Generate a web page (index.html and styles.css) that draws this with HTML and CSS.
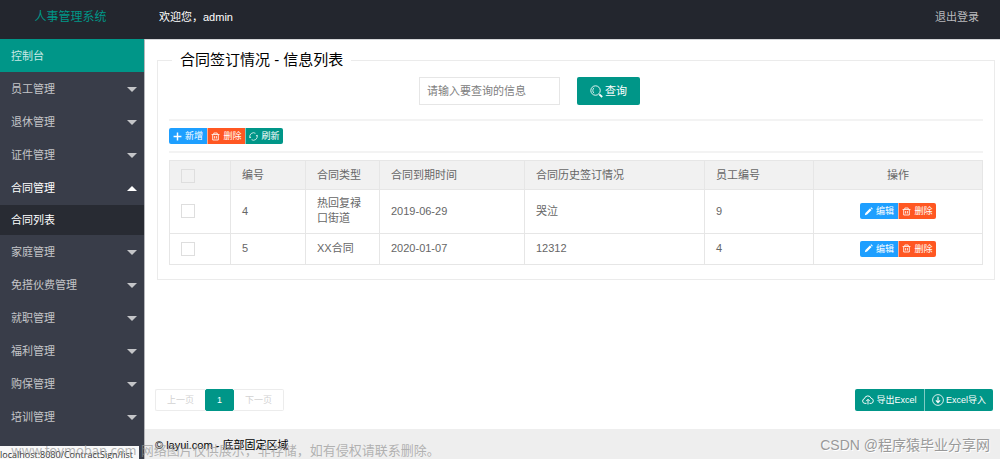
FILE: index.html
```html
<!DOCTYPE html>
<html lang="zh-CN">
<head>
<meta charset="utf-8">
<meta name="viewport" content="width=device-width, initial-scale=1">
<title>人事管理系统</title>
<link rel="stylesheet" href="styles.css">
</head>
<body>
<svg class="sprite" aria-hidden="true">
  <symbol id="i-plus" viewBox="0 0 16 16"><path d="M8 1v14M1 8h14" fill="none" stroke="currentColor" stroke-width="2.6"/></symbol>
  <symbol id="i-trash" viewBox="0 0 16 16"><path d="M1 4.5h14M5 4V1.800h6V4M3 5v9.200h10V5M6.400 7.200v4.400M9.600 7.200v4.400" fill="none" stroke="currentColor" stroke-width="1.5"/></symbol>
  <symbol id="i-refresh" viewBox="0 0 16 16"><path d="M1.500 9.500A6.700 6.700 0 0 1 11.500 2.300M14.500 6.500A6.700 6.700 0 0 1 4.500 13.700" fill="none" stroke="currentColor" stroke-width="1.3"/><path d="M0 8.500l1.700 2.700 2.300-2.200zM16 7.500l-1.700-2.700L12 7z" fill="currentColor"/></symbol>
  <symbol id="i-edit" viewBox="0 0 16 16"><path d="M1.500 14.500l1-4L10.500 2.500l3 3-8 8zM11.500 1.600l1.300-1.200 2.900 2.900-1.200 1.300z" fill="currentColor"/></symbol>
  <symbol id="i-search" viewBox="0 0 16 16"><circle cx="6.800" cy="6.800" r="5.800" fill="none" stroke="currentColor" stroke-width="1.100"/><path d="M4.800 3.500C3 5 3 8.500 4.800 10" fill="none" stroke="currentColor"/><path d="M11.500 11.500l3.500 3.300" stroke="currentColor" stroke-width="2.200"/></symbol>
  <symbol id="i-cloud" viewBox="0 0 16 16"><path d="M6 12.500H3.800a3.200 3.200 0 0 1-.5-6.300A4.600 4.600 0 0 1 12.200 5.800a3.400 3.400 0 0 1 .1 6.700H10M8 14V7.500M5.600 9.500L8 7l2.400 2.500" fill="none" stroke="currentColor" stroke-width="1.300"/></symbol>
  <symbol id="i-down" viewBox="0 0 16 16"><circle cx="8" cy="8" r="7.200" fill="none" stroke="currentColor" stroke-width="1.100"/><path d="M8 3.800v7M5.200 8.500L8 11.500l2.800-3" fill="none" stroke="currentColor" stroke-width="1.500"/></symbol>
</svg>

<header class="header">
  <div class="logo">人事管理系统</div>
  <div class="welcome">欢迎您，admin</div>
  <a class="logout" href="#">退出登录</a>
</header>

<div class="body">
  <nav class="side">
    <a class="item active" href="#">控制台</a>
    <a class="item" href="#">员工管理<i class="caret"></i></a>
    <a class="item" href="#">退休管理<i class="caret"></i></a>
    <a class="item" href="#">证件管理<i class="caret"></i></a>
    <a class="item open" href="#">合同管理<i class="caret"></i></a>
    <a class="sub" href="#">合同列表</a>
    <a class="item" href="#">家庭管理<i class="caret"></i></a>
    <a class="item" href="#">免搭伙费管理<i class="caret"></i></a>
    <a class="item" href="#">就职管理<i class="caret"></i></a>
    <a class="item" href="#">福利管理<i class="caret"></i></a>
    <a class="item" href="#">购保管理<i class="caret"></i></a>
    <a class="item" href="#">培训管理<i class="caret"></i></a>
  </nav>

  <div class="page">
    <main class="main">
      <fieldset class="panel">
        <legend>合同签订情况 - 信息列表</legend>
        <form class="search">
          <input class="query" type="text" aria-label="查询信息" placeholder="请输入要查询的信息">
          <button class="btn btn-search" type="button"><svg class="icon"><use href="#i-search"/></svg>查询</button>
        </form>
        <hr>
        <div class="group">
          <button class="btn xs blue" type="button"><svg class="icon"><use href="#i-plus"/></svg>新增</button>
          <button class="btn xs red" type="button"><svg class="icon"><use href="#i-trash"/></svg>删除</button>
          <button class="btn xs" type="button"><svg class="icon"><use href="#i-refresh"/></svg>刷新</button>
        </div>
        <hr>
        <table class="table">
          <colgroup><col class="c-check"><col class="c-id"><col class="c-type"><col class="c-date"><col class="c-hist"><col class="c-emp"><col class="c-op"></colgroup>
          <thead>
            <tr>
              <th><input type="checkbox" aria-label="全选"></th>
              <th>编号</th><th>合同类型</th><th>合同到期时间</th><th>合同历史签订情况</th><th>员工编号</th><th class="op">操作</th>
            </tr>
          </thead>
          <tbody>
            <tr>
              <td><input type="checkbox" aria-label="选择 4"></td>
              <td>4</td><td>热回复禄口街道</td><td>2019-06-29</td><td>哭泣</td><td>9</td>
              <td><div class="group center">
                <button class="btn xs blue" type="button"><svg class="icon"><use href="#i-edit"/></svg>编辑</button>
                <button class="btn xs red" type="button"><svg class="icon"><use href="#i-trash"/></svg>删除</button>
              </div></td>
            </tr>
            <tr>
              <td><input type="checkbox" aria-label="选择 5"></td>
              <td>5</td><td>XX合同</td><td>2020-01-07</td><td>12312</td><td>4</td>
              <td><div class="group center">
                <button class="btn xs blue" type="button"><svg class="icon"><use href="#i-edit"/></svg>编辑</button>
                <button class="btn xs red" type="button"><svg class="icon"><use href="#i-trash"/></svg>删除</button>
              </div></td>
            </tr>
          </tbody>
        </table>
      </fieldset>

      <div class="bottom">
        <div class="pager">
          <button type="button" disabled>上一页</button>
          <button class="current" type="button">1</button>
          <button type="button" disabled>下一页</button>
        </div>
        <div class="group">
          <button class="btn sm" type="button"><svg class="icon"><use href="#i-cloud"/></svg>导出Excel</button>
          <button class="btn sm" type="button"><svg class="icon"><use href="#i-down"/></svg>Excel导入</button>
        </div>
      </div>
    </main>
    <footer class="footer">© layui.com - 底部固定区域</footer>
  </div>
</div>

<div class="status">localhost:8080/ContractSign/list</div>
<div class="mark mark-left"><span>www.toymoban.com</span><span>网络图片仅供展示，非存储，如有侵权请联系删除。</span></div>
<div class="mark mark-right">CSDN @程序猿毕业分享网</div>
</body>
</html>
```
FILE: styles.css
```css
* { box-sizing: border-box; }

body {
  margin: 0;
  height: 100vh;
  overflow: hidden;
  display: flex;
  flex-direction: column;
  background: #fff;
  color: #000;
  font: 11px/15px "Liberation Sans", "Noto Sans CJK SC", sans-serif;
}

a { color: inherit; text-decoration: none; }
button, input { font: inherit; margin: 0; }
.sprite { display: none; }

.header {
  flex: none;
  display: flex;
  align-items: center;
  height: 40px;
  padding: 0 21px 4px 0;
  background: #23262e;
  border-bottom: 1px solid #d5d6d9;
  color: #fff;
}
.logo { width: 141px; text-align: center; font-size: 12px; color: #009688; }
.welcome { flex: 1; padding-left: 18px; }
.logout { color: #b9babd; }

.body { flex: 1; min-height: 0; display: flex; margin-top: -1px; }

.side {
  flex: none;
  width: 145px;
  background: #393d49;
  border-right: 1px solid #b5b6ba;
  color: #c4c5c8;
}
.item {
  display: flex;
  align-items: center;
  justify-content: space-between;
  height: 33px;
  padding: 2px 7px 0 11px;
}
.item.active { background: #009688; color: #c9e9e6; }
.item.open { color: #fff; }
.caret {
  border: 5px solid transparent;
  border-top-color: #c4c5c8;
  border-bottom-width: 0;
}
.open .caret {
  border-top-width: 0;
  border-bottom: 5px solid #fff;
}
.sub {
  display: flex;
  align-items: center;
  height: 30px;
  margin-top: 1px;
  padding-left: 11px;
  background: #282b33;
  color: #fff;
}

.page { flex: 1; min-width: 0; display: flex; flex-direction: column; }
.main { flex: 1; display: flex; flex-direction: column; padding: 10px 3px 18px 10px; }

.panel {
  min-width: 0;
  margin: 0 2px;
  padding: 0 11px 14px;
  border: 1px solid #ebebeb;
}
.panel legend {
  margin-left: 3px;
  padding: 0 8px;
  font-size: 15px;
  line-height: 22px;
}
.search { display: flex; gap: 17px; padding: 6px 0 14px 250px; }
.query {
  width: 141px;
  height: 28px;
  padding: 0 7px;
  border: 1px solid #e6e6e6;
  background: #fff;
}
.query::placeholder { color: #808080; opacity: 1; }

hr { height: 2px; margin: 0 0 7px; border: 0; background: #f3f3f3; }
hr + .group { margin-bottom: 7px; }

.group { display: flex; }
.group.center { justify-content: center; }
.group .btn + .btn { border-left: 1px solid rgba(255, 255, 255, .5); }
.group .btn { border-radius: 0; }
.group .btn:first-child { border-radius: 2px 0 0 2px; }
.group .btn:last-child { border-radius: 0 2px 2px 0; }

.btn {
  display: flex;
  align-items: center;
  justify-content: center;
  padding: 0;
  border: 0;
  border-radius: 2px;
  background: #009688;
  color: #fff;
  white-space: nowrap;
}
.btn-search { width: 63px; height: 28px; gap: 2px; }
.btn-search .icon { width: 13px; height: 13px; }
.xs { width: 38px; height: 16px; gap: 3px; font-size: 9px; line-height: 16px; }
.xs .icon { width: 9px; height: 9px; }
.sm { width: 69px; height: 22px; gap: 2px; font-size: 9px; }
.sm .icon { width: 12px; height: 12px; }
.blue { background: #1e9fff; }
.red { background: #ff5722; }
.icon { flex: none; }

.table {
  width: 100%;
  table-layout: fixed;
  border-collapse: collapse;
  color: #666;
}
.c-check { width: 61px; }
.c-id { width: 75px; }
.c-type { width: 74px; }
.c-date { width: 145px; }
.c-hist { width: 180px; }
.c-emp { width: 109px; }
.table th, .table td {
  height: 31px;
  padding: 6px 11px 7px;
  border: 1px solid #e6e6e6;
  font-weight: 400;
  text-align: left;
  vertical-align: middle;
}
.table th { height: 29px; padding: 7px 11px 6px; background: #f1f1f1; }
.table th.op { text-align: center; }
.table input {
  appearance: none;
  display: block;
  width: 14px;
  height: 14px;
  border: 1px solid #dedede;
}

.bottom {
  display: flex;
  justify-content: space-between;
  margin-top: auto;
  padding-right: 4px;
}
.pager { display: flex; font-size: 9px; }
.pager button {
  width: 50px;
  height: 22px;
  padding: 0;
  border: 1px solid #ececec;
  background: #fff;
  color: #d2d2d2;
}
.pager .current {
  width: 29px;
  border-color: #009688;
  border-radius: 2px;
  background: #009688;
  color: #fff;
}
.pager button:first-child { border-right: 0; border-radius: 2px 0 0 2px; }
.pager button:last-child { border-left: 0; border-radius: 0 2px 2px 0; }

.footer {
  flex: none;
  height: 30px;
  padding: 0 10px;
  line-height: 32px;
  background: #eee;
}

/* Overlays above the page */
.status {
  position: absolute;
  left: 0;
  bottom: 0;
  width: 139px;
  height: 13px;
  overflow: hidden;
  background: #f8f8f8;
  color: #333;
  font: 9px/17px "Open Sans", "Noto Sans", sans-serif;
  white-space: nowrap;
}
.mark { position: absolute; white-space: nowrap; pointer-events: none; }
.mark-left {
  left: 11px;
  bottom: 1px;
  display: flex;
  gap: 4px;
  color: rgba(150, 150, 150, .7);
  font: 13px/16px "Noto Sans CJK SC", sans-serif;
}
.mark-right {
  right: 10px;
  bottom: 4px;
  color: #999;
  font: 14px/20px "Liberation Sans", "Noto Sans CJK SC", sans-serif;
  text-shadow: 1px 1px 0 #fff;
}
```
